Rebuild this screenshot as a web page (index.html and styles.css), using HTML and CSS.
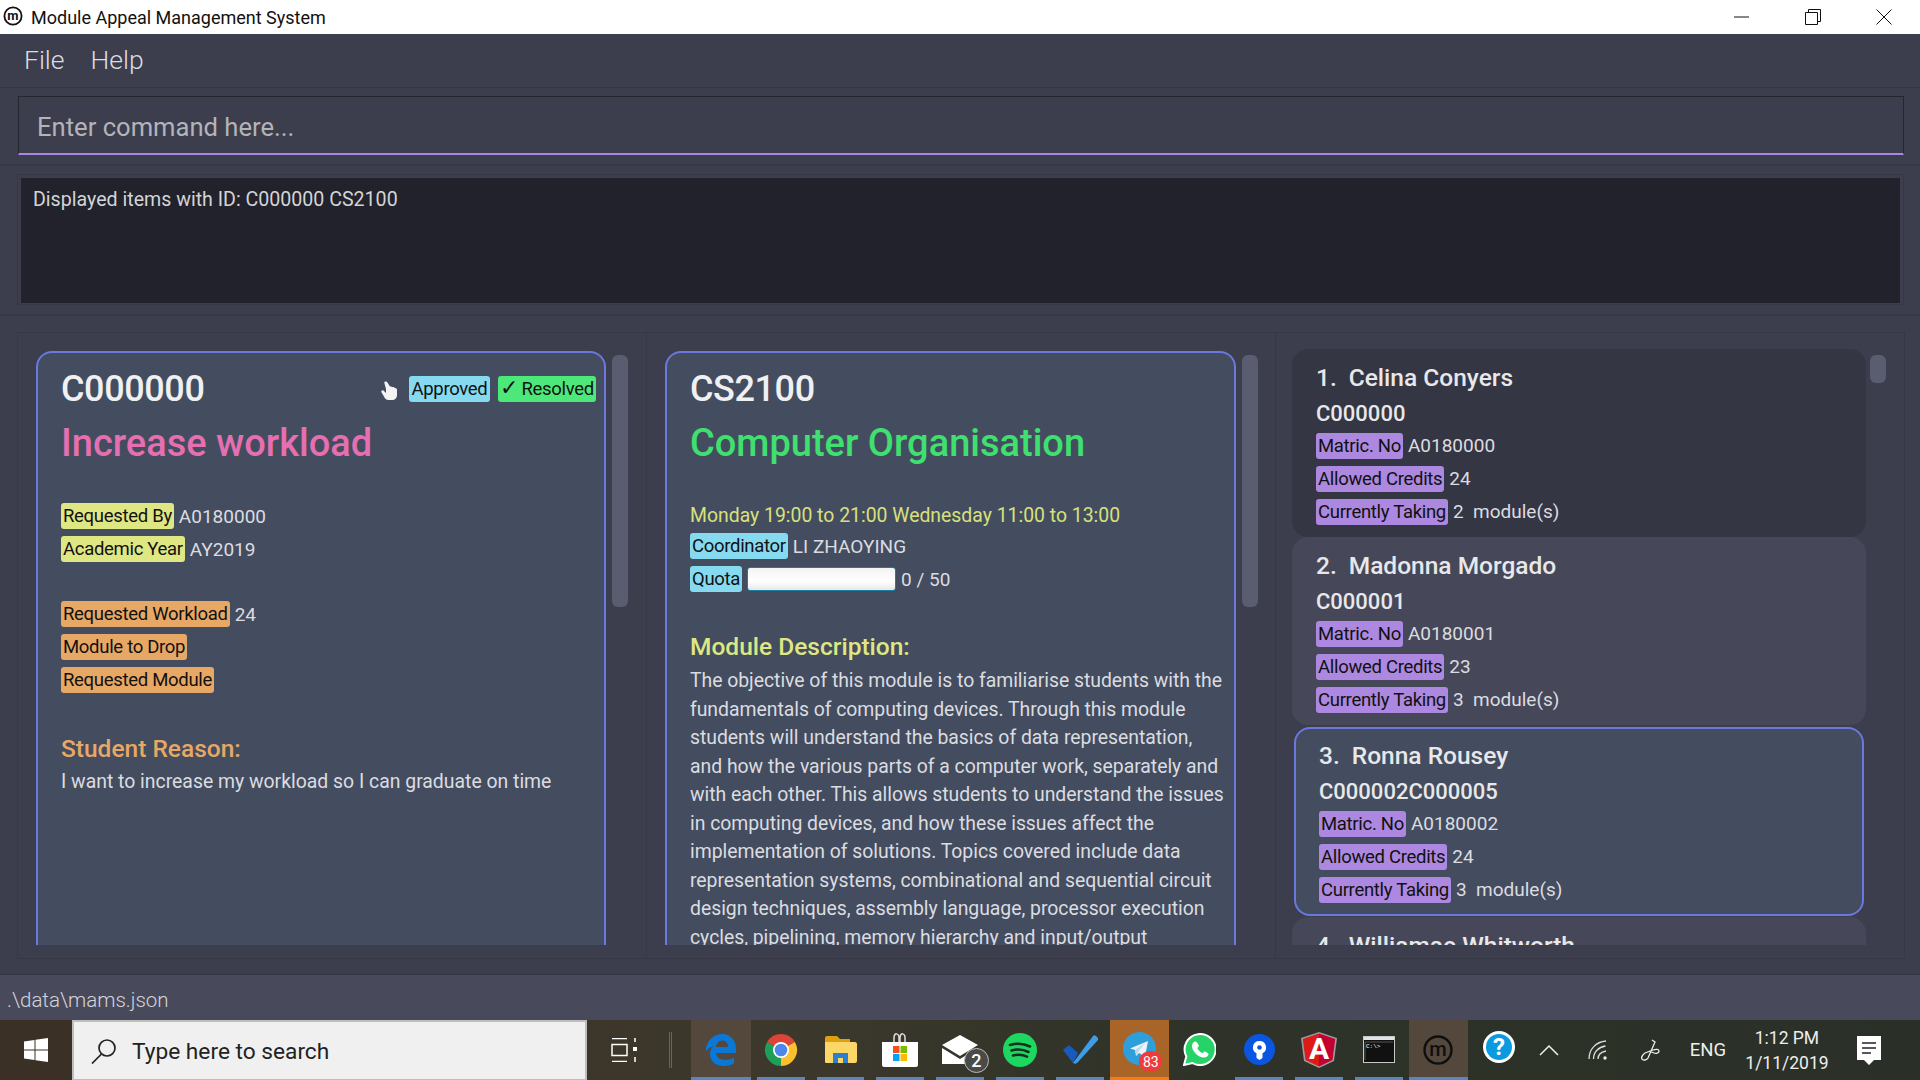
FILE: index.html
```html
<!DOCTYPE html>
<html lang="en">
<head>
    <meta charset="UTF-8">
    <title>Module Appeal Management System</title>
    <link rel="stylesheet" href="styles.css">
</head>
<body>
    <header class="titlebar">
        <svg class="app-logo" width="20" height="20" viewBox="0 0 20 20"><circle cx="10" cy="10" r="8.6" fill="none" stroke="#111" stroke-width="1.8"/><text x="10" y="13.6" text-anchor="middle" class="logo-m">m</text></svg>
        <span class="app-title">Module Appeal Management System</span>
        <div class="win-controls">
            <svg width="16" height="16" viewBox="0 0 16 16"><path d="M0 8h15" stroke="#111" stroke-width="1"/></svg>
            <svg width="16" height="16" viewBox="0 0 16 16"><path d="M3.5 3.5V.5h12v12h-3M.5 3.5h12v12H.5z" fill="none" stroke="#111"/></svg>
            <svg width="16" height="16" viewBox="0 0 16 16"><path d="M.5.5l15 15M15.5.5l-15 15" stroke="#111"/></svg>
        </div>
    </header>

    <nav class="menubar">
        <span>File</span>
        <span>Help</span>
    </nav>

    <section class="command-section">
        <div class="command-box">Enter command here...</div>
    </section>

    <section class="result-section">
        <div class="result-frame">
            <div class="result-box">Displayed items with ID: C000000 CS2100</div>
        </div>
    </section>

    <main class="main-section">
        <div class="columns">
            <div class="column column-appeal">
                <article class="detail-card">
                    <div class="title-row">
                        <h2 class="detail-id">C000000</h2>
                        <svg class="hand" width="17" height="19" viewBox="0 0 17 19"><path d="M4 .6c1-.6 2 .1 2.6 1.1L9 5.6c1-.4 2 0 2.6.6.8-.3 1.8 0 2.2.8 1.2-.2 2.2.6 2.2 2v5c0 3-2 5-5 5H7.5C5 19 4 17.5 3 15.5L.6 11.6c-.6-1-.3-1.900.5-2.200.8-.3 1.600.2 2.400 1.200L5 12V8L3.5 2.500C3.200 1.800 3.400 1 4 .6z" fill="#f4f4f4"/></svg>
                        <span class="tag tag-blue">Approved</span>
                        <span class="tag tag-green"><span class="check">✓</span> Resolved</span>
                    </div>
                    <h1 class="detail-name name-pink">Increase workload</h1>

                    <div class="rows rows-first">
                        <div class="row"><span class="tag tag-yellow">Requested By</span><span>A0180000</span></div>
                        <div class="row"><span class="tag tag-yellow">Academic Year</span><span>AY2019</span></div>
                    </div>
                    <div class="rows rows-second">
                        <div class="row"><span class="tag tag-orange">Requested Workload</span><span>24</span></div>
                        <div class="row"><span class="tag tag-orange">Module to Drop</span></div>
                        <div class="row"><span class="tag tag-orange">Requested Module</span></div>
                    </div>
                    <h3 class="sub-heading heading-orange">Student Reason:</h3>
                    <p class="body-text">I want to increase my workload so I can graduate on time</p>
                </article>
                <div class="scrollbar scrollbar-long"></div>
            </div>

            <div class="column column-module">
                <article class="detail-card">
                    <div class="title-row">
                        <h2 class="detail-id">CS2100</h2>
                    </div>
                    <h1 class="detail-name name-green">Computer Organisation</h1>

                    <div class="timeslots">Monday 19:00 to 21:00 Wednesday 11:00 to 13:00</div>
                    <div class="rows">
                        <div class="row"><span class="tag tag-blue">Coordinator</span><span>LI ZHAOYING</span></div>
                        <div class="row"><span class="tag tag-blue">Quota</span><div class="quota-bar"></div><span>0 / 50</span></div>
                    </div>
                    <h3 class="sub-heading heading-yellow">Module Description:</h3>
                    <p class="body-text description">The objective of this module is to familiarise students with the<br>
                    fundamentals of computing devices. Through this module<br>
                    students will understand the basics of data representation,<br>
                    and how the various parts of a computer work, separately and<br>
                    with each other. This allows students to understand the issues<br>
                    in computing devices, and how these issues affect the<br>
                    implementation of solutions. Topics covered include data<br>
                    representation systems, combinational and sequential circuit<br>
                    design techniques, assembly language, processor execution<br>
                    cycles, pipelining, memory hierarchy and input/output</p>
                </article>
                <div class="scrollbar scrollbar-long"></div>
            </div>

            <div class="column column-list">
                <div class="student-list">
                    <article class="student-card student-dark">
                        <div class="student-name"><span class="index">1.</span>Celina Conyers</div>
                        <div class="student-id">C000000</div>
                        <div class="row"><span class="tag tag-purple">Matric. No</span><span class="value">A0180000</span></div>
                        <div class="row"><span class="tag tag-purple">Allowed Credits</span><span class="value">24</span></div>
                        <div class="row"><span class="tag tag-purple">Currently Taking</span><span class="value">2 &nbsp;module(s)</span></div>
                    </article>
                    <article class="student-card">
                        <div class="student-name"><span class="index">2.</span>Madonna Morgado</div>
                        <div class="student-id">C000001</div>
                        <div class="row"><span class="tag tag-purple">Matric. No</span><span class="value">A0180001</span></div>
                        <div class="row"><span class="tag tag-purple">Allowed Credits</span><span class="value">23</span></div>
                        <div class="row"><span class="tag tag-purple">Currently Taking</span><span class="value">3 &nbsp;module(s)</span></div>
                    </article>
                    <article class="student-card student-selected">
                        <div class="student-name"><span class="index">3.</span>Ronna Rousey</div>
                        <div class="student-id">C000002C000005</div>
                        <div class="row"><span class="tag tag-purple">Matric. No</span><span class="value">A0180002</span></div>
                        <div class="row"><span class="tag tag-purple">Allowed Credits</span><span class="value">24</span></div>
                        <div class="row"><span class="tag tag-purple">Currently Taking</span><span class="value">3 &nbsp;module(s)</span></div>
                    </article>
                    <article class="student-card">
                        <div class="student-name"><span class="index">4.</span>Williamae Whitworth</div>
                    </article>
                </div>
                <div class="scrollbar scrollbar-short"></div>
            </div>
        </div>
    </main>

    <footer class="statusbar">.\data\mams.json</footer>

    <div class="taskbar">
        <div class="start">
            <svg width="24" height="24" viewBox="0 0 24 24"><path d="M0 3.5L10.500 2v9.500H0zM11.500 1.800L24 0v11.500H11.500zM0 12.500h10.500V22L0 20.500zM11.500 12.500H24V24l-12.500-1.800z" fill="#fff"/></svg>
        </div>
        <div class="search">
            <svg width="26" height="26" viewBox="0 0 26 26"><circle cx="16" cy="10" r="8" fill="none" stroke="#222" stroke-width="1.7"/><path d="M10.5 16L1 25.5" stroke="#222" stroke-width="1.7"/></svg>
            <span class="search-text">Type here to search</span>
        </div>
        <div class="taskview">
            <svg width="26" height="24" viewBox="0 0 26 24"><path d="M1 .5h15M1 23.5h15M1 6.5h15v11H1z" fill="none" stroke="#fff" stroke-width="1.5"/><path d="M24 0v4M24 19v5" stroke="#fff" stroke-width="1.5"/><rect x="22" y="9" width="4" height="4" fill="#fff"/></svg>
        </div>
        <div class="task-sep"></div>

        <div class="app app-hover app-open">
            <svg width="32" height="33" viewBox="0 0 32 33"><path d="M1 15C3 6 10 1 17 1c9 0 14 7 14 15v4H11c.5 5 5 7 9 7 4 0 7-1 9-2.500v6c-3 1.500-6 2.500-10 2.500-9 0-14-5-14-12 0-3 1-6 3-8-3 1-5 3-7 5zM11 14h12c0-4-2-6.500-5.500-6.500S11.500 10 11 14z" fill="#0a78d7"/></svg>
        </div>
        <div class="app app-open">
            <svg width="34" height="34" viewBox="0 0 34 34"><path d="M3.1 9A16 16 0 0 1 30.9 9L17 17z" fill="#db4437"/><path d="M30.9 9A16 16 0 0 1 17 33L17 17z" fill="#fbc02d"/><path d="M17 33A16 16 0 0 1 3.1 9L17 17z" fill="#1e9e57"/><circle cx="17" cy="17" r="8" fill="#fff"/><circle cx="17" cy="17" r="6.3" fill="#4f86ec"/></svg>
        </div>
        <div class="app app-open">
            <svg width="33" height="29" viewBox="0 0 33 29"><path d="M1 3c0-1 .7-2 2-2h10l3 3h10v5H1z" fill="#dfa010"/><path d="M1 7h30c1 0 2 1 2 2v17c0 1-1 2-2 2H2c-1 0-1-1-1-2z" fill="#fcd768"/><path d="M9 28v-10h15v10h-5v-5h-5v5z" fill="#2a7fd0"/></svg>
        </div>
        <div class="app app-open">
            <svg width="36" height="35" viewBox="0 0 36 35"><path d="M12 10V6c0-6 5-5 5 0v4M18 10V6c0-6 5-5 5 0v4" fill="none" stroke="#ddd" stroke-width="1.5"/><path d="M0 10h36v23c0 1-1 2-2 2H2c-1 0-2-1-2-2z" fill="#fff"/><rect x="11" y="14" width="6.5" height="7" fill="#f25022"/><rect x="18.5" y="14" width="6.5" height="7" fill="#7fba00"/><rect x="11" y="22" width="6.5" height="7" fill="#00a4ef"/><rect x="18.5" y="22" width="6.5" height="7" fill="#ffb900"/></svg>
        </div>
        <div class="app app-open">
            <svg width="36" height="30" viewBox="0 0 36 30"><path d="M0 10L18 0l18 10-18 11z" fill="#fff"/><path d="M0 13l18 11 18-11v16H0z" fill="#fff"/></svg>
            <span class="app-badge badge-grey">2</span>
        </div>
        <div class="app app-open">
            <svg width="34" height="34" viewBox="0 0 34 34"><circle cx="17" cy="17" r="17" fill="#1ed760"/><path d="M7 12c7-2 14-1.500 20 1.500M8.500 17.500c6-1.700 12-1 17 1.500M10 22.500c5-1.200 10-.8 14 1.200" fill="none" stroke="#15301f" stroke-width="2.6" stroke-linecap="round"/></svg>
        </div>
        <div class="app app-open">
            <svg width="36" height="29" viewBox="0 0 36 29"><path d="M1 15l6-5 9 8-5 10z" fill="#185abd"/><path d="M11 28L31 1c1-1 2-1 3 0l2 2c.5.5.5 1.500 0 2L16 27c-2 2-3 2-5 1z" fill="#3e9de8"/></svg>
        </div>
        <div class="app app-telegram">
            <svg width="33" height="33" viewBox="0 0 33 33"><circle cx="16.5" cy="16.5" r="16.5" fill="#2f9fdc"/><path d="M7 16.5L25 9l-3 16-6-4-3 3-1-6z" fill="#e8f3fa"/><path d="M12 18l10-7-7 9-1 4z" fill="#bcd8ea"/></svg>
            <span class="app-badge badge-red">83</span>
        </div>
        <div class="app">
            <svg width="33" height="33" viewBox="0 0 33 33"><path d="M1 32l2.3-8.500A15.500 15.500 0 1 1 9.500 30z" fill="#25d366" stroke="#fff" stroke-width="2"/><path d="M12 8.500c-1 0-3 1.500-3 4.500 0 5 6 11.500 12 11.500 3 0 4.500-2 4.500-3.500 0-1-3-2.500-4-2.500-.7 0-1.500 1.500-2 1.500-1.500 0-5-3.500-5-5 0-.7 1.300-1.300 1.300-2 0-1-1.500-4.500-3.800-4.500z" fill="#fff"/></svg>
        </div>
        <div class="app app-open">
            <svg width="31" height="31" viewBox="0 0 31 31"><circle cx="15.5" cy="15.5" r="15.5" fill="#0a56e0"/><path d="M15.5 7a6.500 6.500 0 0 0-3 12.300V24l3 2 3-2v-4.700a6.500 6.500 0 0 0-3-12.300z" fill="#fff"/><circle cx="15.5" cy="13.5" r="2.3" fill="#0a56e0"/></svg>
        </div>
        <div class="app app-open">
            <svg width="36" height="36" viewBox="0 0 36 36"><path d="M18 0L36 6l-3 23-15 7-15-7L0 6z" fill="#9a9aa0"/><path d="M18 1.500L1.800 7l2.700 21L18 34.500z" fill="#dd1b16"/><path d="M18 1.500L34.200 7l-2.700 21L18 34.500z" fill="#c3002f"/><text x="18" y="27" text-anchor="middle" class="logo-a">A</text></svg>
        </div>
        <div class="app app-open">
            <svg width="32" height="27" viewBox="0 0 32 27"><rect x=".5" y=".5" width="31" height="26" fill="#111" stroke="#c8c8c8"/><rect x="1" y="1" width="30" height="3" fill="#dfe4ea"/><path d="M2 24V6h28" fill="none" stroke="#555" stroke-width="1"/><text x="3" y="12" class="logo-prompt">C:\&gt;</text></svg>
        </div>
        <div class="app app-hover app-open">
            <svg width="30" height="30" viewBox="0 0 30 30"><circle cx="15" cy="15" r="13.5" fill="none" stroke="#0f0f0f" stroke-width="2.4"/><text x="15" y="21" text-anchor="middle" class="logo-mams">m</text></svg>
        </div>

        <div class="tray-item tray-help">
            <svg width="32" height="32" viewBox="0 0 32 32"><circle cx="16" cy="16" r="16" fill="#fff"/><circle cx="16" cy="16" r="13" fill="#0a9ae0"/><text x="16" y="24" text-anchor="middle" class="logo-help">?</text></svg>
        </div>
        <div class="tray-item tray-chevron">
            <svg width="20" height="12" viewBox="0 0 20 12"><path d="M1 11l9-9 9 9" fill="none" stroke="#eee" stroke-width="1.5"/></svg>
        </div>
        <div class="tray-item tray-wifi">
            <svg width="20" height="20" viewBox="0 0 20 20"><path d="M1 19C1 9 8 2 18 1M5.5 19c0-7 5-12 12-13M10 19c0-4 3-7 8-8" fill="none" stroke="#ddd" stroke-width="1.3"/><circle cx="17" cy="18" r="1.7" fill="#eee"/></svg>
        </div>
        <div class="tray-item tray-pen">
            <svg width="22" height="22" viewBox="0 0 22 22"><path d="M13 1l3 2-7 16c-1 2-5 3-6 1-1-1 0-4 3-6l8-3c3-1 6-1 6 1s-3 3-5 2L10 12" fill="none" stroke="#eee" stroke-width="1.3"/></svg>
        </div>
        <div class="tray-item tray-lang">ENG</div>
        <div class="tray-item tray-clock">
            <span>1:12 PM</span>
            <span>1/11/2019</span>
        </div>
        <div class="tray-item tray-action">
            <svg width="24" height="29" viewBox="0 0 24 29"><path d="M0 0h24v24h-7l-5 5-5-5H0z" fill="#fff"/><path d="M5 7h14M5 12h14M5 17h9" stroke="#222" stroke-width="1.4"/></svg>
        </div>
    </div>
</body>
</html>
```
FILE: styles.css
```css
* {
    box-sizing: border-box;
}
html, body {
    margin: 0;
    width: 1920px;
    height: 1080px;
    overflow: hidden;
}
body {
    display: flex;
    flex-direction: column;
    font-family: Roboto, "Open Sans", sans-serif;
    background-color: #3c3e4e;
    color: #dcdce0;
}
h1, h2, h3, p {
    margin: 0;
    font-weight: normal;
}

/* window chrome */
.titlebar {
    display: flex;
    align-items: center;
    height: 34px;
    padding-left: 3px;
    background: #fff;
    color: #111;
    font-size: 18px;
}
.app-logo {
    margin-right: 8px;
    margin-top: -3px;
}
.logo-m {
    font-size: 13px;
    font-weight: 700;
    fill: #111;
}
.win-controls {
    display: flex;
    gap: 55px;
    margin-left: auto;
    margin-right: 28px;
}
.menubar {
    display: flex;
    gap: 26px;
    height: 54px;
    padding: 10px 0 0 24px;
    font-size: 26.5px;
    font-weight: 300;
    color: #dddde0;
    border-bottom: 1px solid #343643;
}

/* command and result */
.command-section {
    height: 78px;
    padding: 8px 16px 0 18px;
    border-bottom: 2px solid #363845;
}
.command-box {
    height: 59px;
    padding: 15px 0 0 18px;
    font-size: 25.6px;
    color: #b4b4b8;
    border-top: 1px solid #25262f;
    border-left: 1px solid #25262f;
    border-right: 1px solid #25262f;
    border-bottom: 2px solid #a987e0;
}
.result-section {
    height: 150px;
    padding: 8px 16px 0 17px;
    border-bottom: 2px solid #363845;
}
.result-frame {
    height: 131px;
    padding: 3px 3px 2px 3px;
    border: 1px solid #363845;
}
.result-box {
    height: 125px;
    padding: 10px 12px;
    background: #21222b;
    font-size: 19.6px;
    color: #d4d4d6;
}

/* the three columns */
.main-section {
    height: 659px;
    padding: 16px 15px 0 17px;
    border-bottom: 1px solid #343643;
}
.columns {
    display: flex;
    height: 627px;
    border: 1px solid #363845;
}
.column {
    display: flex;
    height: 100%;
    padding-bottom: 13px;
    border-right: 1px solid #363845;
}
.column:last-child {
    border-right: 0;
}
.column-appeal {
    width: 629px;
    padding-top: 18px;
    padding-left: 18px;
}
.column-module {
    width: 629px;
    padding-top: 18px;
    padding-left: 18px;
}
.column-list {
    flex: 1;
    padding-top: 16px;
    padding-left: 16px;
}
.scrollbar {
    flex: none;
    width: 16px;
    margin-left: 6px;
    margin-top: 4px;
    background: #5a5c70;
    border-radius: 6px;
}
.scrollbar-long {
    height: 252px;
}
.scrollbar-short {
    height: 28px;
    margin-left: 4px;
    margin-top: 6px;
}

/* detail cards */
.detail-card {
    width: 570px;
    overflow: hidden;
    padding: 13px 8px 0 23px;
    background: #434d5f;
    border: 2px solid #6a78e0;
    border-bottom: 0;
    border-radius: 16px 16px 0 0;
}
.column-module .detail-card {
    width: 571px;
}
.title-row {
    display: flex;
    align-items: center;
    height: 46px;
}
.detail-id {
    font-size: 36px;
    font-weight: 500;
    letter-spacing: -0.4px;
    color: #f0f0f2;
    margin-right: auto;
}
.hand {
    margin-right: 3px;
    margin-top: 2px;
}
.detail-name {
    margin-top: 8px;
    height: 46px;
    line-height: 46px;
    font-size: 38px;
    font-weight: 500;
}
.name-pink {
    color: #e56fb0;
}
.name-green {
    color: #3fe06f;
}
.rows {
    display: flex;
    flex-direction: column;
    gap: 7px;
}
.rows-first {
    margin-top: 37px;
}
.rows-second {
    margin-top: 39px;
}
.row {
    display: flex;
    align-items: center;
    gap: 5px;
    height: 26px;
    font-size: 19px;
    color: #dcdce0;
}
.tag {
    display: inline-block;
    height: 26px;
    line-height: 27px;
    padding: 0 2px;
    border-radius: 3px;
    font-size: 18.5px;
    letter-spacing: -0.3px;
    color: #111;
    white-space: nowrap;
}
.title-row .tag {
    margin-left: 8px;
}
.check {
    font-size: 22px;
    line-height: 20px;
}
.tag-blue {
    background: #85daf0;
}
.tag-green {
    background: #4de87a;
}
.tag-yellow {
    background: #dfe783;
}
.tag-orange {
    background: #e8a865;
}
.tag-purple {
    background: #ac88e0;
}
.sub-heading {
    height: 32px;
    line-height: 32px;
    font-size: 24.5px;
    font-weight: 500;
}
.heading-orange {
    margin-top: 40px;
    color: #e8a865;
}
.heading-yellow {
    margin-top: 39px;
    color: #dfe783;
}
.body-text {
    margin-top: 3px;
    font-size: 19.4px;
    line-height: 28.5px;
    color: #dcdce0;
    white-space: nowrap;
}
.description {
    margin-top: 4px;
    letter-spacing: -0.03px;
}
.timeslots {
    margin-top: 36px;
    height: 31px;
    line-height: 28px;
    font-size: 19.4px;
    color: #d8e07c;
}
.quota-bar {
    width: 149px;
    height: 24px;
    background: linear-gradient(#f4f4f4, #ffffff 60%, #e8e8e8);
    border: 1px solid #1a7fa0;
    border-radius: 3px;
}

/* student list */
.student-list {
    width: 574px;
    overflow: hidden;
}
.student-card {
    height: 188px;
    padding: 14px 0 0 24px;
    background: #464859;
    border-radius: 16px;
}
.student-dark {
    background: #343644;
}
.student-selected {
    height: 189px;
    margin: 2px 2px 1px;
    padding: 12px 0 0 23px;
    background: #434d5f;
    border: 2px solid #6a78e0;
}
.student-name {
    height: 30px;
    line-height: 30px;
    font-size: 24.5px;
    font-weight: 500;
    color: #e8e8ea;
}
.index {
    margin-right: 12px;
}
.student-id {
    height: 30px;
    margin-top: 6px;
    margin-bottom: 4px;
    line-height: 30px;
    font-size: 22px;
    font-weight: 500;
    color: #e8e8ea;
}
.student-card .row {
    margin-bottom: 7px;
}
.value {
    padding-bottom: 2px;
}

/* status and taskbar */
.statusbar {
    height: 45px;
    padding: 13px 0 0 7px;
    background: #484a5c;
    font-size: 20.5px;
    font-weight: 300;
    color: #d4d4d8;
}
.taskbar {
    display: flex;
    align-items: stretch;
    height: 60px;
    background: linear-gradient(90deg, #3a3025 0%, #3d382c 40%, #2f3328 60%, #2a3028 100%);
    color: #eee;
}
.start {
    display: flex;
    align-items: center;
    justify-content: center;
    width: 72px;
}
.search {
    display: flex;
    align-items: center;
    gap: 15px;
    width: 515px;
    padding-left: 17px;
    background: #f0f0f0;
    border: 2px solid #bebebe;
    border-bottom-width: 1px;
    font-size: 22.7px;
    color: #222;
}
.search-text {
    padding-top: 2px;
}
.taskview {
    display: flex;
    align-items: center;
    justify-content: center;
    width: 73px;
}
.task-sep {
    width: 3px;
    height: 36px;
    margin: 12px 19px 0 9px;
    border-left: 1px solid #6a6658;
    border-right: 1px solid #6a6658;
}
.app {
    position: relative;
    display: flex;
    align-items: center;
    justify-content: center;
    width: 59.8px;
    padding-bottom: 1px;
}
.app-open::after {
    content: "";
    position: absolute;
    left: 6px;
    right: 6px;
    bottom: 0;
    height: 3px;
    background: #5a86c0;
}
.app-hover {
    background: #54483c;
}
.app-hover::after {
    left: 0;
    right: 0;
}
.app-telegram {
    background: #a96428;
    border-bottom: 3px solid #f97a0e;
}
.app-badge {
    position: absolute;
    display: flex;
    align-items: center;
    justify-content: center;
    border-radius: 50%;
    color: #fff;
}
.badge-grey {
    right: 1px;
    top: 28px;
    width: 25px;
    height: 25px;
    background: #4a4a48;
    border: 1px solid #bbb;
    font-size: 18px;
    font-weight: 500;
}
.badge-red {
    right: 7px;
    top: 31px;
    width: 23px;
    height: 21px;
    background: #ef3b3b;
    font-size: 14px;
}
.logo-a {
    font-size: 30px;
    font-weight: 700;
    fill: #fff;
}
.logo-prompt {
    font-size: 6px;
    font-family: "Liberation Mono", monospace;
    fill: #fff;
}
.logo-mams {
    font-size: 20px;
    font-weight: 500;
    fill: #0f0f0f;
}
.logo-help {
    font-size: 24px;
    font-weight: 700;
    fill: #fff;
}
.tray-item {
    display: flex;
    align-items: center;
    justify-content: center;
}
.tray-help {
    width: 60.6px;
    padding-bottom: 6px;
}
.tray-chevron {
    width: 40px;
}
.tray-wifi {
    width: 58px;
}
.tray-pen {
    width: 46px;
}
.tray-lang {
    width: 70px;
    font-size: 18.5px;
}
.tray-clock {
    flex-direction: column;
    gap: 5px;
    width: 88px;
    font-size: 17.5px;
}
.tray-action {
    width: 76px;
}
```
